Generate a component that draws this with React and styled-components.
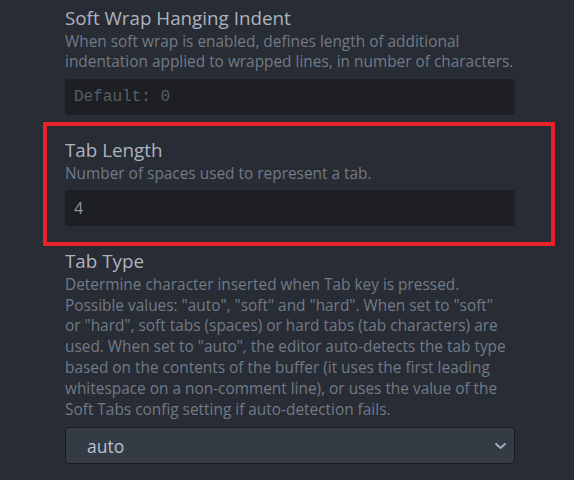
import React from "react";
import styled, { createGlobalStyle } from "styled-components";

const Global = createGlobalStyle`
  html, body {
    margin: 0;
    padding: 0;
    background: #282c34;
  }
  body {
    font-family: "Open Sans", "Noto Sans", sans-serif;
  }
`;

const Page = styled.div`
  width: 574px;
  height: 480px;
  overflow: hidden;
  background: #282c34;
  box-sizing: border-box;
  padding: 6px 59px 0 65px;
`;

const List = styled.div`
  display: flex;
  flex-direction: column;
  gap: 23px;
`;

const Section = styled.section`
  display: flex;
  flex-direction: column;
  ${(p) =>
    p.$highlight &&
    `
    border: 4px solid #e8212b;
    padding: 12px 36px 16px 18px;
    margin: -16px -40px -20px -22px;
  `}
`;

const Title = styled.div`
  font-size: 18.8px;
  line-height: 24px;
  color: #adb4c0;
`;

const Desc = styled.div`
  margin-top: 1.5px;
  font-size: 15.4px;
  line-height: 20.8px;
  color: #727a87;
  white-space: nowrap;
`;

const TextInput = styled.div`
  margin-top: 6px;
  height: 36px;
  box-sizing: border-box;
  background: #1d1f23;
  border-radius: 3px;
  display: flex;
  align-items: center;
  padding-left: 9px;
  font-size: ${(p) => (p.$mono ? "16px" : "16px")};
  color: ${(p) => (p.$placeholder ? "#585e69" : "#8e95a1")};
  font-family: ${(p) =>
    p.$mono ? '"Liberation Mono", "DejaVu Sans Mono", monospace' : "inherit"};
`;

const Select = styled.div`
  margin-top: 7px;
  height: 37px;
  box-sizing: border-box;
  background: #353b45;
  border: 1px solid #181a1f;
  border-radius: 4px;
  display: flex;
  align-items: center;
  justify-content: space-between;
  padding: 0 7px 0 21px;
  font-size: 17.5px;
  color: #b6c1d2;
`;

const Chevron = () => (
  <svg width="13" height="8" viewBox="0 0 13 8" fill="none">
    <path d="M1.5 1.5 L6.5 6 L11.5 1.5" stroke="#a3abb8" strokeWidth="2" />
  </svg>
);

export default function App() {
  return (
    <>
      <Global />
      <Page>
        <List>
          <Section>
            <Title>Soft Wrap Hanging Indent</Title>
            <Desc>
              When soft wrap is enabled, defines length of additional
              <br />
              indentation applied to wrapped lines, in number of characters.
            </Desc>
            <TextInput $mono $placeholder>
              Default: 0
            </TextInput>
          </Section>
          <Section $highlight>
            <Title>Tab Length</Title>
            <Desc>Number of spaces used to represent a tab.</Desc>
            <TextInput>4</TextInput>
          </Section>
          <Section>
            <Title>Tab Type</Title>
            <Desc>
              Determine character inserted when Tab key is pressed.
              <br />
              Possible values: "auto", "soft" and "hard". When set to "soft"
              <br />
              or "hard", soft tabs (spaces) or hard tabs (tab characters) are
              <br />
              used. When set to "auto", the editor auto-detects the tab type
              <br />
              based on the contents of the buffer (it uses the first leading
              <br />
              whitespace on a non-comment line), or uses the value of the
              <br />
              Soft Tabs config setting if auto-detection fails.
            </Desc>
            <Select>
              <span>auto</span>
              <Chevron />
            </Select>
          </Section>
        </List>
      </Page>
    </>
  );
}
